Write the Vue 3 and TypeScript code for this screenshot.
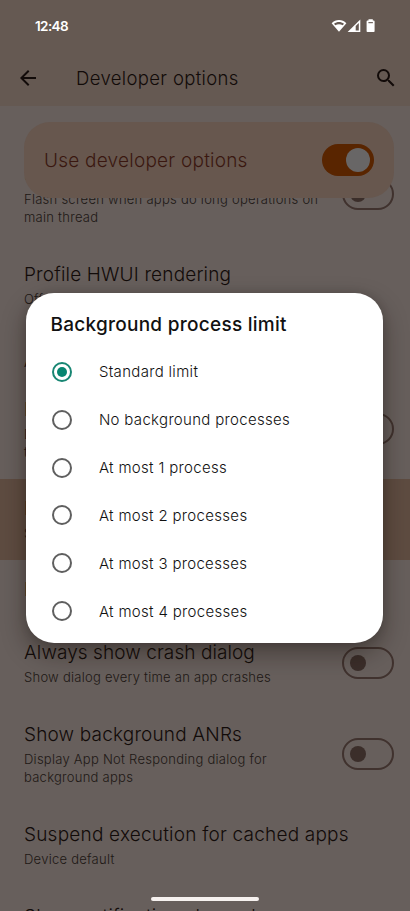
<script setup lang="ts">
import { ref } from 'vue'

interface Preference {
  id: string
  title: string
  summary?: string[]
  toggle?: boolean
  highlighted?: boolean
  category?: boolean
}

const preferences: Preference[] = [
  { id: 'strict', title: 'Strict mode enabled', summary: ['Flash screen when apps do long operations on', 'main thread'], toggle: true },
  { id: 'hwui', title: 'Profile HWUI rendering', summary: ['Off'] },
  { id: 'apps', title: 'Apps', category: true },
  { id: 'keep', title: 'Don’t keep activities', summary: ['Destroy every activity as soon as', 'the user leaves it'], toggle: true },
  { id: 'limit', title: 'Background process limit', summary: ['Standard limit'], highlighted: true },
  { id: 'check', title: 'Background check' },
  { id: 'crash', title: 'Always show crash dialog', summary: ['Show dialog every time an app crashes'], toggle: true },
  { id: 'anr', title: 'Show background ANRs', summary: ['Display App Not Responding dialog for', 'background apps'], toggle: true },
  { id: 'cached', title: 'Suspend execution for cached apps', summary: ['Device default'] },
  { id: 'notif', title: 'Show notification channel' },
]

const options: string[] = [
  'Standard limit',
  'No background processes',
  'At most 1 process',
  'At most 2 processes',
  'At most 3 processes',
  'At most 4 processes',
]
const selected = ref(0)
</script>

<template>
  <div class="screen">
    <header class="top">
      <div class="status">
        <span class="clock">12:48</span>
        <svg class="status-icons" width="46" height="16" viewBox="0 0 46 16">
          <path d="M.6 5.2C4.8 1 11.2 1 15.4 5.2L8 13.8Z" fill="#fff" />
          <path d="M3 5.7C6 3.5 10 3.5 13 5.7L11.7 7.3C9.6 5.8 6.4 5.8 4.3 7.3Z" fill="#655952" />
          <path d="M16.6 14L29.3 1.5V14Z" fill="#fff" />
          <path d="M24.7 8L27.8 5V12.5H24.7Z" fill="#655952" />
          <path d="M37.5 1.2H41.8V2.4H42.6Q43.6 2.4 43.6 3.4V13.2Q43.6 14 42.8 14H36.4Q35.6 14 35.6 13.2V3.4Q35.6 2.4 36.6 2.4H37.5Z" fill="#fff" />
          <path d="M37.4 4.1H41.9V5.2H37.4Z" fill="#655952" />
        </svg>
      </div>
      <div class="appbar">
        <svg class="back" width="24" height="24" viewBox="0 0 24 24">
          <path d="M20 11H7.83l5.59-5.59L12 4l-8 8 8 8 1.41-1.41L7.83 13H20z" />
        </svg>
        <h1 class="heading">Developer options</h1>
        <svg class="search" width="24" height="24" viewBox="0 0 24 24">
          <path d="M15.5 14h-.79l-.28-.27A6.47 6.47 0 0 0 16 9.5 6.5 6.5 0 1 0 9.5 16c1.61 0 3.09-.59 4.23-1.57l.27.28v.79l5 4.99L20.49 19zm-6 0C7.01 14 5 11.99 5 9.5S7.01 5 9.5 5 14 7.01 14 9.5 11.99 14 9.5 14z" />
        </svg>
      </div>
    </header>

    <section class="master">
      <span class="master-label">Use developer options</span>
      <span class="switch on"><span class="thumb"></span></span>
    </section>

    <div class="list">
      <div
        v-for="p in preferences"
        :key="p.id"
        :class="['row', p.id, { highlighted: p.highlighted, category: p.category }]"
      >
        <div class="copy">
          <div class="title">{{ p.title }}</div>
          <div v-for="line in p.summary" :key="line" class="summary">{{ line }}</div>
        </div>
        <span v-if="p.toggle" class="switch"><span class="thumb"></span></span>
      </div>
    </div>

    <div class="dialog" role="dialog">
      <h2 class="dialog-title">Background process limit</h2>
      <div v-for="(o, i) in options" :key="o" class="option" @click="selected = i">
        <span :class="['radio', { checked: i === selected }]"></span>
        <span class="option-label">{{ o }}</span>
      </div>
    </div>

    <div class="home-bar"></div>
  </div>
</template>

<style>
body {
  margin: 0;
  background: #675f5c;
}
</style>

<style scoped>
.screen {
  position: relative;
  width: 410px;
  height: 911px;
  overflow: hidden;
  background: #675f5c;
  color: #120b09;
  font-family: Inter, Roboto, sans-serif;
  font-weight: 300;
}
.top {
  height: 106px;
  background: #655952;
}
.status {
  display: flex;
  align-items: center;
  justify-content: space-between;
  height: 50px;
  padding: 0 33px 0 35px;
}
.status-icons {
  margin-top: 2px;
}
.clock {
  color: #fff;
  font-size: 13.5px;
  font-weight: 600;
  line-height: 18px;
  padding-top: 1px;
  letter-spacing: -0.6px;
}
.appbar {
  display: flex;
  align-items: center;
  height: 56px;
  padding: 0 12px 0 16px;
}
.back,
.search {
  flex: none;
  fill: #120b09;
}
.heading {
  flex: 1;
  margin: 0 0 0 36px;
  font-size: 18.5px;
  font-weight: 300;
  line-height: 24px;
  letter-spacing: 0.36px;
}
.master {
  position: relative;
  z-index: 1;
  display: flex;
  align-items: center;
  justify-content: space-between;
  height: 76px;
  box-sizing: border-box;
  margin: 16px 16px 0 24px;
  padding: 0 20px;
  border-radius: 26px;
  background: #67574e;
}
.master-label {
  color: #3a1710;
  font-size: 19px;
  letter-spacing: 0.23px;
}
.switch {
  flex: none;
  display: flex;
  align-items: center;
  box-sizing: border-box;
  width: 52px;
  height: 32px;
  padding-left: 6px;
  border: 2px solid #40322e;
  border-radius: 16px;
}
.switch .thumb {
  width: 16px;
  height: 16px;
  border-radius: 50%;
  background: #3b2e2a;
}
.switch.on {
  justify-content: flex-end;
  padding: 0 4px;
  border: 0;
  background: #592500;
}
.switch.on .thumb {
  width: 24px;
  height: 24px;
  background: #686666;
}
.list {
  margin-top: -53.4px;
}
.row {
  display: flex;
  align-items: center;
  justify-content: space-between;
  height: 81.75px;
  box-sizing: border-box;
  padding: 0 16px 0 24px;
  white-space: nowrap;
}
.row.strict,
.row.keep,
.row.anr {
  height: 99.7px;
}
.row.category {
  height: 53px;
  padding-top: 21px;
}
.row.check {
  height: 62px;
}
.row.notif {
  align-items: flex-start;
  padding-top: 18px;
}
.highlighted {
  background: #5e4c41;
}
.copy {
  padding-bottom: 0.5px;
}
.title {
  font-size: 19px;
  line-height: 26px;
  margin-bottom: 2px;
  letter-spacing: 0.17px;
}
.crash .title {
  letter-spacing: 0.08px;
}
.cached .title {
  letter-spacing: 0.21px;
}
.category .title {
  font-size: 14px;
  line-height: 20px;
}
.summary {
  color: #201815;
  font-size: 13px;
  line-height: 18px;
  letter-spacing: 0.26px;
}
.dialog {
  position: absolute;
  z-index: 2;
  left: 26.4px;
  top: 293.4px;
  width: 357px;
  height: 350px;
  box-sizing: border-box;
  padding-top: 18px;
  border-radius: 28px;
  background: #fff;
  box-shadow: 0 10px 24px rgba(20, 12, 8, 0.4), 0 0 10px rgba(20, 12, 8, 0.12);
}
.dialog-title {
  margin: 0 0 8.6px 24px;
  color: #111;
  font-size: 19px;
  font-weight: 450;
  line-height: 28px;
  letter-spacing: 0.27px;
}
.option {
  display: flex;
  align-items: center;
  height: 47.85px;
  padding-left: 26px;
}
.radio {
  display: flex;
  align-items: center;
  justify-content: center;
  box-sizing: border-box;
  width: 20px;
  height: 20px;
  border: 2px solid #5f5f5f;
  border-radius: 50%;
}
.radio.checked {
  border-color: #188673;
}
.radio.checked::after {
  content: '';
  width: 10px;
  height: 10px;
  border-radius: 50%;
  background: #078570;
}
.option-label {
  margin-left: 26.5px;
  color: #111;
  font-size: 15px;
  letter-spacing: 0.32px;
}
.home-bar {
  position: absolute;
  z-index: 3;
  left: 151px;
  top: 897px;
  width: 108px;
  height: 4px;
  border-radius: 2px;
  background: #f6f1ef;
}
</style>
